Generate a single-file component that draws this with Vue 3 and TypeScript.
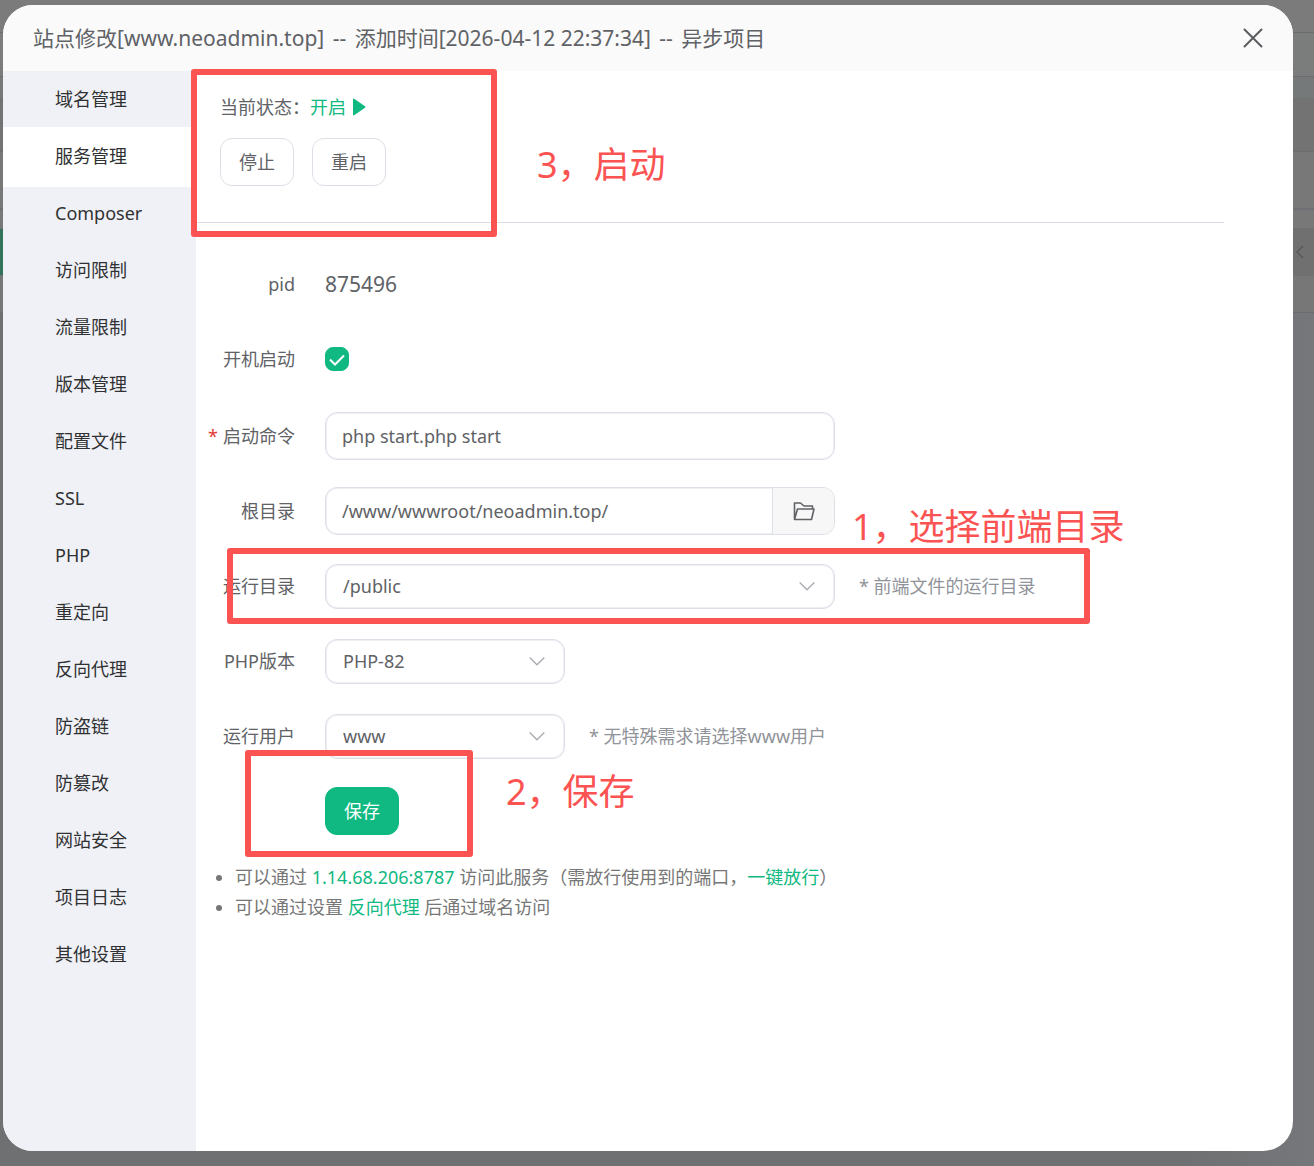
<script setup lang="ts">
import { ref } from 'vue'

const menu: string[] = [
  '域名管理', '服务管理', 'Composer', '访问限制', '流量限制', '版本管理', '配置文件', 'SSL',
  'PHP', '重定向', '反向代理', '防盗链', '防篡改', '网站安全', '项目日志', '其他设置',
]
const active = ref('服务管理')
const autoStart = ref(true)
const command = ref('php start.php start')
const root = ref('/www/wwwroot/neoadmin.top/')
const runDir = ref('/public')
const phpVersion = ref('PHP-82')
const user = ref('www')
</script>

<template>
  <div class="page">
    <div class="backdrop" aria-hidden="true">
      <div class="band b-top"></div>
      <div class="band b-nav"></div>
      <div class="band b-gap"></div>
      <div class="band b-head"></div>
      <div class="band b-row"></div>
      <div class="band b-space"></div>
      <div class="band b-tool">
        <span class="add"></span>
        <svg class="back" width="10" height="14" viewBox="0 0 10 14"><path d="M8 1 2 7l6 6" fill="none" stroke="#555" stroke-width="1.3" /></svg>
      </div>
      <div class="band b-foot"></div>
      <div class="band b-rest"></div>
    </div>

    <section class="modal" role="dialog" aria-labelledby="title">
      <header class="head">
        <h1 id="title">站点修改[www.neoadmin.top] <span class="sep">--</span> 添加时间[2026-04-12 22:37:34] <span class="sep">--</span> 异步项目</h1>
        <button class="close" type="button" aria-label="关闭">
          <svg width="20" height="20" viewBox="0 0 20 20"><path d="M1.5 1.5l17 17M18.5 1.5l-17 17" fill="none" stroke="#5a5c60" stroke-width="2" stroke-linecap="round" /></svg>
        </button>
      </header>

      <div class="body">
        <nav class="side">
          <a v-for="item in menu" :key="item" href="#" :class="{ on: item === active }" @click.prevent="active = item">{{ item }}</a>
        </nav>

        <main class="main">
          <div class="status">
            <p class="state">
              当前状态：<span class="green">开启</span>
              <svg width="14" height="18" viewBox="0 0 14 18"><path d="M1 1.5Q1 0 2.5 1L13 8.2q1 .8 0 1.6L2.5 17Q1 18 1 16.5z" fill="#10b981" /></svg>
            </p>
            <div class="actions">
              <button class="btn" type="button">停止</button>
              <button class="btn" type="button">重启</button>
            </div>
          </div>

          <form class="form" @submit.prevent>
            <div class="row plain">
              <span class="label">pid</span>
              <span class="pid">875496</span>
            </div>
            <div class="row plain">
              <label class="label" for="auto">开机启动</label>
              <span class="check">
                <input id="auto" v-model="autoStart" type="checkbox" />
                <svg v-if="autoStart" width="24" height="24" viewBox="0 0 24 24"><path d="M5 12.5l5 5L19 8.5" fill="none" stroke="#fff" stroke-width="2" /></svg>
              </span>
            </div>
            <div class="row">
              <label class="label" for="cmd"><span class="req">*</span>启动命令</label>
              <input id="cmd" v-model="command" class="field wide" type="text" />
            </div>
            <div class="row">
              <label class="label" for="root">根目录</label>
              <div class="group wide">
                <input id="root" v-model="root" type="text" />
                <button type="button" aria-label="选择目录">
                  <svg width="22" height="20" viewBox="0 0 22 20"><path d="M1.5 18.5V2H7.500L11 5H19.500V8M1.500 18.5L4.500 8H21L18.500 18.5Z" fill="none" stroke="#606266" stroke-width="1.6" stroke-linejoin="round" /></svg>
                </button>
              </div>
            </div>
            <div class="row">
              <label class="label" for="dir">运行目录</label>
              <div class="select wide">
                <select id="dir" v-model="runDir"><option>/public</option></select>
                <svg width="16" height="10" viewBox="0 0 16 10"><path d="M.7 1.500L8 8.800 15.300 1.500" fill="none" stroke="#a8abb2" stroke-width="1.3" /></svg>
              </div>
              <span class="hint">* 前端文件的运行目录</span>
            </div>
            <div class="row">
              <label class="label" for="php">PHP版本</label>
              <div class="select">
                <select id="php" v-model="phpVersion"><option>PHP-82</option></select>
                <svg width="16" height="10" viewBox="0 0 16 10"><path d="M.7 1.500L8 8.800 15.300 1.500" fill="none" stroke="#a8abb2" stroke-width="1.3" /></svg>
              </div>
            </div>
            <div class="row">
              <label class="label" for="user">运行用户</label>
              <div class="select">
                <select id="user" v-model="user"><option>www</option></select>
                <svg width="16" height="10" viewBox="0 0 16 10"><path d="M.7 1.500L8 8.800 15.300 1.500" fill="none" stroke="#a8abb2" stroke-width="1.3" /></svg>
              </div>
              <span class="hint">* 无特殊需求请选择www用户</span>
            </div>
            <div class="row">
              <span class="label"></span>
              <button class="btn save" type="submit">保存</button>
            </div>
          </form>

          <ul class="tips">
            <li>可以通过 <a href="#">1.14.68.206:8787</a> 访问此服务（需放行使用到的端口，<a href="#">一键放行</a>）</li>
            <li>可以通过设置 <a href="#">反向代理</a> 后通过域名访问</li>
          </ul>
        </main>
      </div>
    </section>

    <div class="mark m3"></div>
    <div class="mark m1"></div>
    <div class="mark m2"></div>
    <p class="note n3">3，启动</p>
    <p class="note n1">1，选择前端目录</p>
    <p class="note n2">2，保存</p>
  </div>
</template>

<style>
body {
  margin: 0;
  background: #6f7072;
}
</style>

<style scoped>
* {
  box-sizing: border-box;
}
.page {
  position: relative;
  display: grid;
  min-height: 100vh;
  font: 18px/24px "Noto Sans", "Noto Sans CJK SC", sans-serif;
  color: #606266;
}
.backdrop,
.modal {
  grid-area: 1 / 1;
}
.backdrop {
  display: flex;
  flex-direction: column;
}
.band {
  border-bottom: 1px solid #6c6c6e;
}
.b-top { height: 33px; background: #7b7b7b; }
.b-nav { height: 44px; background: #7b7c7c; }
.b-gap { height: 21px; background: #76797a; border: 0; }
.b-head { height: 54px; background: #737373; }
.b-row { height: 58px; background: #787878; border-bottom: 2px solid #6e6e74; }
.b-space { height: 18px; background: #787878; border: 0; }
.b-tool {
  display: flex;
  justify-content: space-between;
  align-items: center;
  height: 48px;
  padding-right: 9px;
  background: #707070;
  border: 0;
}
.add {
  width: 20px;
  height: 46px;
  background: #33735c;
}
.b-foot { height: 37px; background: #777; }
.b-rest { flex: 1; background: linear-gradient(90deg, #6f7072 0 90%, #76777a); border: 0; }

.modal {
  display: flex;
  flex-direction: column;
  margin: 5px 21px 15px 3px;
  overflow: hidden;
  background: #fff;
  border-radius: 30px;
  z-index: 1;
}
.head {
  display: flex;
  align-items: center;
  justify-content: space-between;
  height: 66px;
  padding: 0 30px;
  background: #fafafa;
}
h1 {
  margin: 0;
  font-size: 21px;
  font-weight: 400;
  line-height: 30px;
}
.sep {
  padding: 0 3px;
}
button {
  font: inherit;
  color: inherit;
  cursor: pointer;
}
.close {
  display: flex;
  padding: 0;
  background: none;
  border: 0;
}
.body {
  display: flex;
  flex: 1;
}
.side {
  flex: none;
  width: 193px;
  background: #f0f1f6;
}
.side a {
  display: block;
  padding-left: 52px;
  line-height: 57px;
  color: #303133;
  text-decoration: none;
}
.side a.on {
  background: #fff;
  box-shadow: 0 -1px 0 #fff, 0 2px 0 #fff;
}
.main {
  flex: 1;
  min-width: 0;
}
.status {
  height: 152px;
  margin-right: 69px;
  padding: 24px 24px 0;
  border-bottom: 1px solid #dcdce6;
}
.state {
  display: flex;
  align-items: center;
  margin: 0;
}
.state svg {
  margin-left: 6px;
}
.green,
.tips a {
  color: #10b981;
  text-decoration: none;
}
.actions {
  display: flex;
  gap: 18px;
  margin-top: 19px;
}
.btn {
  width: 74px;
  height: 48px;
  padding: 0;
  background: #fff;
  border: 1px solid #dcdfe6;
  border-radius: 12px;
}
.btn.save {
  color: #fff;
  background: #10b981;
  border-color: #10b981;
}
.form {
  padding-top: 39px;
}
.row {
  display: flex;
  align-items: center;
  height: 48px;
  margin-bottom: 27px;
}
.row.plain {
  height: 44px;
  margin-bottom: 31px;
}
.label {
  width: 99px;
  margin-right: 30px;
  text-align: right;
  white-space: nowrap;
}
.req {
  margin-right: 5px;
  color: #e53935;
}
.pid {
  font-size: 21px;
}
.check {
  display: grid;
}
.check > * {
  grid-area: 1 / 1;
}
.check svg {
  pointer-events: none;
}
.check input {
  width: 24px;
  height: 24px;
  margin: 0;
  appearance: none;
  border: 1px solid #dcdfe6;
  border-radius: 8px;
}
.check input:checked {
  background: #10b981;
  border-color: #10b981;
}
input,
select {
  font: inherit;
  color: inherit;
}
.field,
.group,
.select {
  background: #fff;
  border: 1px solid #dcdfe6;
  border-radius: 12px;
  box-shadow: inset 0 0 0 1px #eff0f4;
}
.field {
  height: 48px;
  padding: 0 16px;
}
.group {
  display: flex;
  height: 48px;
  overflow: hidden;
}
.group input {
  flex: 1;
  min-width: 0;
  padding: 0 16px;
  background: none;
  border: 0;
}
.group button {
  display: flex;
  align-items: center;
  justify-content: center;
  width: 62px;
  background: #f7f7f7;
  border: 0;
  border-left: 1px solid #dcdfe6;
}
.select {
  display: grid;
  align-items: center;
  width: 240px;
  height: 45px;
}
.wide {
  width: 510px;
}
.select > * {
  grid-area: 1 / 1;
}
.select select {
  width: 100%;
  height: 100%;
  padding: 0 48px 0 17px;
  appearance: none;
  background: none;
  border: 0;
}
.select svg {
  justify-self: end;
  margin-right: 19px;
  pointer-events: none;
}
.hint {
  margin-left: 24px;
  color: #909399;
}
.tips {
  margin: 0;
  padding-left: 39px;
  line-height: 30px;
  color: #777;
}

.mark {
  position: absolute;
  z-index: 2;
  border: 6px solid #fb5252;
  border-radius: 3px;
  pointer-events: none;
}
.m3 { left: 191px; top: 69px; width: 306px; height: 168px; }
.m1 { left: 227px; top: 548px; width: 863px; height: 76px; }
.m2 { left: 245px; top: 750px; width: 228px; height: 107px; }
.note {
  position: absolute;
  z-index: 2;
  margin: 0;
  font-size: 36px;
  line-height: 48px;
  color: #fb5252;
  white-space: nowrap;
}
.n3 { left: 537px; top: 141px; }
.n1 { left: 852px; top: 503px; }
.n2 { left: 506px; top: 768px; }
</style>
